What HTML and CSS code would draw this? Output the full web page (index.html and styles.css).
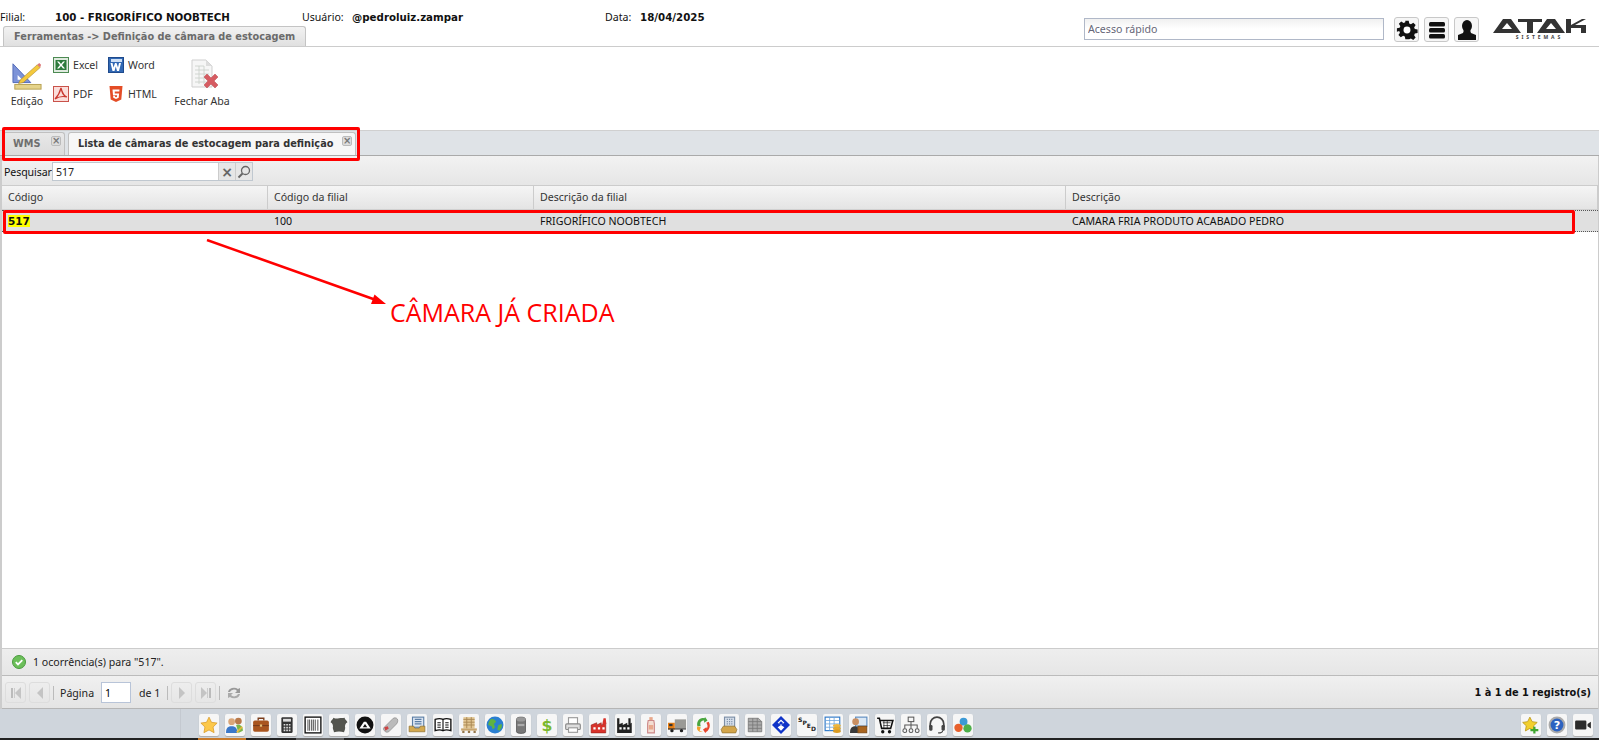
FILE: index.html
```html
<!DOCTYPE html>
<html lang="pt-BR">
<head>
<meta charset="utf-8">
<title>Definição de câmara de estocagem</title>
<link rel="stylesheet" href="styles.css">
</head>
<body>
<svg class="defs" width="0" height="0" aria-hidden="true">
<defs>
<symbol id="first" viewBox="0 0 14 14"><rect x="2" y="2" width="2" height="10" fill="#bbb"/><rect x="5" y="2" width="1" height="10" fill="#ccc"/><path d="M12 1v12L6 7z" fill="#c4c4c4"/></symbol>
<symbol id="prev" viewBox="0 0 14 14"><path d="M10 1v12L4 7z" fill="#c4c4c4"/></symbol>
<symbol id="next" viewBox="0 0 14 14"><path d="M4 1v12l6-6z" fill="#c4c4c4"/></symbol>
<symbol id="last" viewBox="0 0 14 14"><path d="M2 1v12l6-6z" fill="#c4c4c4"/><rect x="8" y="2" width="1" height="10" fill="#ccc"/><rect x="10" y="2" width="2" height="10" fill="#bbb"/></symbol>
</defs>
</svg>

<header class="top">
  <div class="top-info">
    <div class="info-row">
      <span class="lbl lbl-filial">Filial:</span><b class="val val-filial">100 - FRIGORÍFICO NOOBTECH</b>
      <span class="lbl lbl-user">Usuário:</span><b class="val val-user">@pedroluiz.zampar</b>
      <span class="lbl lbl-data">Data:</span><b class="val">18/04/2025</b>
    </div>
    <div class="crumb">Ferramentas -&gt; Definição de câmara de estocagem</div>
  </div>
  <div class="top-right">
    <input class="quick" type="text" placeholder="Acesso rápido">
    <button class="tbtn" aria-label="Configurações"><svg width="22" height="22" viewBox="0 0 24 24"><path fill="#111" d="M10 1h4l.6 3.2 2 .9 2.8-1.8 2.8 2.8-1.8 2.8.9 2 3.2.6v4l-3.2.6-.9 2 1.8 2.8-2.8 2.8-2.8-1.8-2 .9L14 23h-4l-.6-3.2-2-.9-2.8 1.8-2.8-2.8 1.8-2.8-.9-2L0 14v-4l3.2-.6.9-2L2.300 4.600l2.800-2.800 2.800 1.800 2-.9z" transform="translate(1 1) scale(.92)"/><circle cx="12" cy="12" r="3.800" fill="#fff"/></svg></button>
    <button class="tbtn" aria-label="Menu"><svg width="20" height="20" viewBox="0 0 20 20"><rect x="2" y="2" width="16" height="4.500" rx="1.500" fill="#111"/><rect x="2" y="8" width="16" height="4.500" rx="1.500" fill="#111"/><rect x="2" y="14" width="16" height="4.500" rx="1.500" fill="#111"/></svg></button>
    <button class="tbtn" aria-label="Usuário"><svg width="20" height="22" viewBox="0 0 20 22"><ellipse cx="10" cy="7" rx="5" ry="6" fill="#111"/><path d="M7 11h6l1 3 5 2v5H1v-5l5-2z" fill="#111"/></svg></button>
    <div class="logo">
      <svg width="93" height="14" viewBox="0 0 93 14"><path fill="#333" fill-rule="evenodd" d="M0 14 10 0h8l10 14zM9 10h10l-5-6z"/><path fill="#333" d="M25 0h24v3H40v11h-6V3h-9z"/><path fill="#333" fill-rule="evenodd" d="M44 14 54 0h8l10 14zM53 10h10l-5-6z"/><path fill="#333" d="M73 0h5v6l11-6h4L82 6h11v8h-5V9H78v5h-5z"/></svg>
      <span class="logo-sub">SISTEMAS</span>
    </div>
  </div>
</header>

<section class="toolbar">
  <div class="tool tool-big tool-edit">
    <svg width="30" height="30" viewBox="0 0 32 30"><path d="M1 2 20 22H1z" fill="#7d93d8" stroke="#5069b8"/><path d="M6 14l5 5H6z" fill="#fff"/><path d="M9 19 27 3l3 3-18 16-5 1z" fill="#f4c93c" stroke="#a98421" stroke-width=".6"/><path d="M27 3l3 3 1-3-2-2z" fill="#d77"/><rect x="3" y="24" width="28" height="5" fill="#e5d38a" stroke="#b69f4f"/></svg>
    <span>Edição</span>
  </div>
  <div class="tool-grid">
    <div class="tool"><svg class="ic" width="16" height="16" viewBox="0 0 16 16"><rect x=".5" y=".5" width="15" height="15" fill="#dfeadf" stroke="#4c8a52"/><rect x="2.500" y="3" width="11" height="10" fill="#2c7a3b"/><path d="M4 4.500 7 8l-3 3.500h2L8 9l2 2.500h2L9 8l3-3.500h-2L8 7 6 4.500z" fill="#fff"/></svg><span>Excel</span></div>
    <div class="tool"><svg class="ic" width="16" height="16" viewBox="0 0 16 16"><rect x=".5" y=".5" width="15" height="15" fill="#3168b4" stroke="#1f4a8c"/><rect x="3" y="2" width="11" height="3" fill="#cfe0f5"/><path d="M2.500 6h2l1 4.500L7 6h1.500L10 10.500 11 6h2l-2 8H9L7.800 9.500 6.500 14h-2z" fill="#fff"/></svg><span>Word</span></div>
    <div class="tool"><svg class="ic" width="16" height="16" viewBox="0 0 16 16"><rect x=".5" y=".5" width="15" height="15" fill="#fbdedb" stroke="#c9524a"/><path d="M8 2c-1 4-3 8-6 11 3-2 8-3 12-2-4-1-5-5-6-9z" fill="none" stroke="#c9362e" stroke-width="1.200"/></svg><span>PDF</span></div>
    <div class="tool"><svg class="ic" width="16" height="16" viewBox="0 0 16 16"><path d="M1.500 0h13l-1.200 13.500L8 16l-5.300-2.500z" fill="#e44d26"/><path d="M4.500 3.500h7l-.2 2H6.700l.1 2h4.300l-.4 4.300L8 13l-2.700-1.200-.2-2h1.800l.1 1L8 11.300l1-.5.1-1.500H5z" fill="#fff"/></svg><span>HTML</span></div>
  </div>
  <div class="tool tool-big tool-close">
    <svg width="36" height="32" viewBox="0 0 36 32"><path d="M8 1h14l6 6v21H8z" fill="#f6f6f6" stroke="#cfcfcf"/><path d="M22 1v6h6z" fill="#ddd"/><g fill="none" stroke="#c9cfc9" stroke-width=".8"><path d="M11 7h9M11 11h14M11 15h14M11 19h14M11 23h14M15 7v18M20 7v18"/></g><path d="M20 18l3-3 4 4 4-4 3 3-4 4 4 4-3 3-4-4-4 4-3-3 4-4z" fill="#d65c62" stroke="#b9454b" stroke-width=".5"/></svg>
    <span>Fechar Aba</span>
  </div>
</section>

<nav class="tabs">
  <div class="tab tab-off"><span>WMS</span><i class="x">×</i></div>
  <div class="tab tab-on"><span>Lista de câmaras de estocagem para definição</span><i class="x">×</i></div>
</nav>

<main class="panel">
  <div class="search">
    <label class="search-lbl" for="q">Pesquisar</label>
    <div class="search-box">
      <input id="q" type="text" value="517">
      <span class="sbtn sbtn-x">×</span>
      <span class="sbtn"><svg width="14" height="14" viewBox="0 0 14 14"><circle cx="8.500" cy="5.500" r="4" fill="none" stroke="#666" stroke-width="1.300"/><path d="M5.500 8.500 1.500 12.500" stroke="#666" stroke-width="2"/></svg></span>
    </div>
  </div>
  <div class="grid grid-head">
    <div class="c c1">Código</div><div class="c c2">Código da filial</div><div class="c c3">Descrição da filial</div><div class="c c4">Descrição</div>
  </div>
  <div class="grid grid-row">
    <div class="c c1"><mark>517</mark></div><div class="c c2">100</div><div class="c c3">FRIGORÍFICO NOOBTECH</div><div class="c c4">CAMARA FRIA PRODUTO ACABADO PEDRO</div>
  </div>
  <div class="grid-body"></div>
  <div class="status">
    <svg width="14" height="14" viewBox="0 0 14 14"><circle cx="7" cy="7" r="6.500" fill="#6cbf5a" stroke="#4a9a3e"/><path d="M3.800 7.200 6 9.400l4.300-4.300" fill="none" stroke="#fff" stroke-width="1.800"/></svg>
    <span>1 ocorrência(s) para "517".</span>
  </div>
  <div class="pager">
    <span class="pbtn"><svg width="14" height="14"><use href="#first"/></svg></span>
    <span class="pbtn"><svg width="14" height="14"><use href="#prev"/></svg></span>
    <i class="sep"></i>
    <span class="pg-lbl">Página</span>
    <input class="pg-in" type="text" value="1">
    <span class="pg-de">de 1</span>
    <i class="sep sep-b"></i>
    <span class="pbtn"><svg width="14" height="14"><use href="#next"/></svg></span>
    <span class="pbtn"><svg width="14" height="14"><use href="#last"/></svg></span>
    <i class="sep"></i>
    <svg class="refresh" width="16" height="16" viewBox="0 0 16 16"><path d="M2 7a6 5 0 0 1 10-3l2-1v5H9l2-2A4 3.500 0 0 0 4 7z" fill="#999"/><path d="M14 9a6 5 0 0 1-10 3l-2 1V8h5L5 10a4 3.500 0 0 0 7-1z" fill="#aaa"/></svg>
    <b class="pg-total">1 à 1 de 1 registro(s)</b>
  </div>
</main>

<footer class="dock">
  <div class="dock-main">
    <span class="di"><svg viewBox="0 0 16 16"><path d="M8 1l2.200 4.600 5 .7-3.600 3.500.9 5L8 12.400 3.500 14.800l.9-5L.8 6.300l5-.7z" fill="#fcc84a" stroke="#d99b2b" stroke-width=".7"/></svg></span>
    <span class="di"><svg viewBox="0 0 16 16"><circle cx="5" cy="5" r="3" fill="#d9a679"/><circle cx="11" cy="4.500" r="3" fill="#b9794a"/><path d="M0 15c0-5 2-6 5-6s5 1 5 6z" fill="#3b78c9"/><path d="M9 8c4-1 6 1 6 5l-4 2z" fill="#7ab648"/><path d="M9 14l5-5 1 1-5 5z" fill="#e9b93c"/></svg></span>
    <span class="di"><svg viewBox="0 0 16 16"><path d="M5.500 4V2h5v2" fill="none" stroke="#7a3c1b" stroke-width="1.200"/><rect x="1" y="4" width="14" height="10" rx="1.500" fill="#a9551f"/><rect x="1" y="8" width="14" height="1" fill="#7a3c1b"/><rect x="7" y="7.500" width="2" height="2" fill="#e6c27a"/></svg></span>
    <span class="di"><svg viewBox="0 0 16 16"><rect x="3" y="1" width="10" height="14" rx="1" fill="#333"/><rect x="4.500" y="2.500" width="7" height="2.500" fill="#ddd"/><path d="M5 7h1.500v1.500H5zM7.300 7h1.500v1.500H7.300zM9.600 7h1.500v1.500H9.600zM5 9.500h1.500V11H5zM7.300 9.500h1.500V11H7.300zM9.600 9.500h1.500V11H9.600zM5 12h1.500v1.500H5zM7.300 12h1.500v1.500H7.300zM9.600 12h1.500v1.500H9.600z" fill="#ddd"/></svg></span>
    <span class="di"><svg viewBox="0 0 16 16"><rect x="1" y="1" width="14" height="14" fill="#fff" stroke="#111" stroke-width="1.200"/><path d="M3.500 3v10M5 3v10M6.800 3v10M8.300 3v10M10 3v10M12.300 3v10" stroke="#555" stroke-width=".9"/></svg></span>
    <span class="di"><svg viewBox="0 0 16 16"><path d="M3 1.500c2 1 3 1 5 .5s3 0 5-.5c0 2 2 2 2.500 4-2 1-2.500 3-2 5 0 2-1 3-1 4-3-1-6-1-9 0 0-2-1-2-1-4 .5-2 0-4-2-5C1 3.500 3 3 3 1.500z" fill="#53544e"/></svg></span>
    <span class="di"><svg viewBox="0 0 16 16"><circle cx="8" cy="8" r="7.500" fill="#111"/><path d="M3 11l4-6h2l4 6z" fill="#fff"/><path d="M6 10l2-3 2 3z" fill="#111"/></svg></span>
    <span class="di"><svg viewBox="0 0 16 16"><path d="M2 10 10 2c2-1 4 0 4 2s-1 3-2 4l-6 6c-2 1-3 0-4-1s-1-2 0-3z" fill="#bbb" stroke="#888" stroke-width=".6"/><path d="M2 10l3-1 1 2-3 2z" fill="#c44"/></svg></span>
    <span class="di"><svg viewBox="0 0 16 16"><rect x="4" y="1" width="10" height="9" fill="#dce6f3" stroke="#5c7fa6"/><path d="M6 3h6M6 5h6M6 7h6" stroke="#5c7fa6"/><path d="M1 9h4l1 2h4l1-2h4v5H1z" fill="#d4a94f" stroke="#8a6c2a" stroke-width=".6"/></svg></span>
    <span class="di"><svg viewBox="0 0 16 16"><path d="M1 3c3-1 5-1 7 0 2-1 4-1 7 0v10c-3-1-5-1-7 0-2-1-4-1-7 0z" fill="#fff" stroke="#111" stroke-width="1.200"/><path d="M8 3v10M3 6h3M3 8h3M3 10h3M10 6h3M10 8h3M10 10h3" stroke="#111"/></svg></span>
    <span class="di"><svg viewBox="0 0 16 16"><path d="M3 1h10v10H3z" fill="#e2c692"/><path d="M3 3h10M3 5.500h10M3 8h10M6 1v10M10 1v10" stroke="#a88752" stroke-width=".8"/><path d="M1 11h14v2H1z" fill="#c8a56c"/><path d="M2 13h2v2H2zM7 13h2v2H7zM12 13h2v2h-2z" fill="#94764a"/></svg></span>
    <span class="di"><svg viewBox="0 0 16 16"><circle cx="8" cy="8" r="7.500" fill="#2a7fd0"/><path d="M4 3c2-1 4 0 5 2l-2 2 1 3-2 2-1-3-3-1c0-2 1-4 2-5zM11 8l3-1v3l-2 3-2-1z" fill="#5fb341"/></svg></span>
    <span class="di"><svg viewBox="0 0 16 16"><path d="M4 3a4 2 0 0 1 8 0v11a4 1.500 0 0 1-8 0z" fill="#777" stroke="#444" stroke-width=".6"/><rect x="5" y="7" width="6" height="2" fill="#aaa"/><ellipse cx="8" cy="3" rx="4" ry="1.800" fill="#999"/></svg></span>
    <span class="di"><svg viewBox="0 0 16 16"><text x="8" y="13" text-anchor="middle" class="dollar">$</text></svg></span>
    <span class="di"><svg viewBox="0 0 16 16"><rect x="4" y="1.500" width="8" height="6" fill="#fff" stroke="#999"/><rect x="1.500" y="7" width="13" height="5" rx="1" fill="#ddd" stroke="#888"/><rect x="4" y="10.500" width="8" height="4" fill="#fff" stroke="#999"/></svg></span>
    <span class="di"><svg viewBox="0 0 16 16"><path d="M1 8l5-2v2l4-2v2l4-2v9H1z" fill="#d8322a" stroke="#8f1e18" stroke-width=".5"/><path d="M11 7l1-5h2l.5 5z" fill="#d8322a"/><path d="M3 10h2v2H3zM7 10h2v2H7zM11 10h2v2h-2z" fill="#fff"/></svg></span>
    <span class="di"><svg viewBox="0 0 16 16"><path d="M1 8l5-2v2l4-2v2l4-2v9H1z" fill="#222"/><path d="M1 2h2v6H1zM11 2h2v5h-2z" fill="#222"/><path d="M3 10h2v2H3zM6.500 10h2v2h-2zM10 10h2v2h-2z" fill="#fff"/></svg></span>
    <span class="di"><svg viewBox="0 0 16 16"><rect x="6.500" y="1" width="3" height="3" fill="#e8a88c"/><path d="M5.500 4h5l.5 3v8H5V7z" fill="#f3ddd2" stroke="#c88"/><rect x="6" y="8" width="4" height="4" fill="#e8a88c"/></svg></span>
    <span class="di"><svg viewBox="0 0 16 16"><rect x="6" y="3" width="10" height="8" fill="#9a9a96"/><path d="M0 6h6v6H0z" fill="#e67e14"/><rect x="1" y="7" width="3" height="2" fill="#333"/><rect x="0" y="11" width="16" height="1" fill="#333"/><circle cx="3.500" cy="13" r="1.500" fill="#222"/><circle cx="12" cy="13" r="1.500" fill="#222"/></svg></span>
    <span class="di"><svg viewBox="0 0 16 16"><path d="M3 9C2 5 5 1 9 2l1-1 2 3-3 2V4C6 4 5 6 6 9z" fill="#4aa63f"/><path d="M13 5c2 3 1 7-2 9l-1 1-2-3 3-2 .5 1c1-2 .5-3-.5-5z" fill="#e8462e"/><path d="M3 9l3 1-1 3 3 1H5C3 13 2 11 3 9z" fill="#f2a12c"/></svg></span>
    <span class="di"><svg viewBox="0 0 16 16"><rect x="4" y="1" width="9" height="9" fill="#d5deea" stroke="#7c8ea6"/><path d="M6 3h5M6 5h5M6 7h5" stroke="#7c8ea6" stroke-dasharray="1 1"/><path d="M3 9h10l2 3-1 3H2l-1-3z" fill="#d3a54a" stroke="#8a6c2a" stroke-width=".6"/></svg></span>
    <span class="di"><svg viewBox="0 0 16 16"><path d="M2 2h9l3 3v9H2z" fill="#aaa" stroke="#666" stroke-width=".6"/><path d="M2 5h12M2 8h12M2 11h12M6 2v12M10 2v12" stroke="#777" stroke-width=".7"/></svg></span>
    <span class="di"><svg viewBox="0 0 16 16"><path d="M8 0 16 8 8 16 0 8z" fill="#1034c8"/><path d="M5 6l3-3 3 3-3 2zM5 10l3-2 3 2-3 3z" fill="#fff"/><path d="M6 6.500l2-1.800 2 1.800-2 1.200z" fill="#1034c8"/></svg></span>
    <span class="di di-sped"><span>S</span><span>P</span><span>E</span><span>D</span></span>
    <span class="di"><svg viewBox="0 0 16 16"><rect x="1" y="1" width="13" height="12" fill="#fff" stroke="#2c78c8"/><path d="M1 4h13M1 7h13M1 10h13M5 1v12M9 1v12" stroke="#6aa3dc" stroke-width=".7"/><ellipse cx="11.500" cy="8.500" rx="3.500" ry="1.500" fill="#eeb53c"/><ellipse cx="11.500" cy="11" rx="3.500" ry="1.500" fill="#e8a92c"/><ellipse cx="11.500" cy="13.500" rx="3.500" ry="1.500" fill="#d9991f"/></svg></span>
    <span class="di"><svg viewBox="0 0 16 16"><rect x="5" y="1" width="10" height="8" fill="#dbe8f5" stroke="#5c8cc0"/><circle cx="5" cy="5" r="3" fill="#c98f62"/><path d="M0 15c0-5 2-6 5-6l2 1v5z" fill="#3a3a3a"/><rect x="7" y="9" width="8" height="6" fill="#a9651f" stroke="#6e4012" stroke-width=".6"/></svg></span>
    <span class="di"><svg viewBox="0 0 16 16"><path d="M1 2h2l2 9h8l2-7H4" fill="#fff" stroke="#111" stroke-width="1.400"/><path d="M6 6h7M6.500 8.500h6M7 4v7M10 4v7" stroke="#111" stroke-width=".6"/><circle cx="6" cy="14" r="1.500" fill="#111"/><circle cx="12" cy="14" r="1.500" fill="#111"/></svg></span>
    <span class="di"><svg viewBox="0 0 16 16"><g fill="none" stroke="#555" stroke-width=".9"><rect x="5.500" y="1" width="5" height="4"/><path d="M8 5v3M2.500 11V8h11v3M8 8v3"/><circle cx="2.500" cy="13" r="1.700"/><circle cx="8" cy="13" r="1.700"/><circle cx="13.500" cy="13" r="1.700"/></g></svg></span>
    <span class="di"><svg viewBox="0 0 16 16"><path d="M2 10V7a6 6 0 0 1 12 0v3" fill="none" stroke="#444" stroke-width="1.500"/><rect x="1" y="8" width="3" height="5" rx="1" fill="#444"/><rect x="12" y="8" width="3" height="5" rx="1" fill="#444"/><path d="M13 13c0 2-2 2-4 2" fill="none" stroke="#444"/></svg></span>
    <span class="di"><svg viewBox="0 0 16 16"><circle cx="8.500" cy="5" r="3.500" fill="#3c9ad6"/><circle cx="4" cy="10.500" r="3.700" fill="#e8602c"/><circle cx="12" cy="11" r="3.700" fill="#4eb04a"/></svg></span>
  </div>
  <div class="dock-side">
    <span class="di"><svg viewBox="0 0 16 16"><path d="M7 1l2 4 4.500.7-3.200 3 .8 4.600L7 11 3 13.300l.8-4.600-3.200-3L5 5z" fill="#f2cf2e" stroke="#b99312" stroke-width=".7"/><path d="M10 9.500h2v2h2.500v2H12v2h-2v-2H7.500v-2H10z" fill="#3fa52f"/></svg></span>
    <span class="di"><svg viewBox="0 0 16 16"><circle cx="8" cy="8" r="7.500" fill="#aaa"/><circle cx="8" cy="8" r="5.700" fill="#2c62c0"/><text x="8" y="11.500" text-anchor="middle" class="q">?</text></svg></span>
    <span class="di"><svg viewBox="0 0 16 16"><rect x="1" y="4" width="10" height="8" rx="1" fill="#2b2b2b"/><path d="M12 7l3-2v6l-3-2z" fill="#2b2b2b"/></svg></span>
  </div>
</footer>
<div class="taskbar"><i class="task-a"></i><i class="task-b"></i></div>

<div class="note note-tabs"></div>
<div class="note note-row"></div>
<svg class="arrow" width="190" height="80" viewBox="0 0 190 80"><path d="M1 1 170 61" stroke="#f00" stroke-width="2.500"/><path d="M180 65 165 65 168.500 55.600z" fill="#f00"/></svg>
<div class="callout">CÂMARA JÁ CRIADA</div>
</body>
</html>
```
FILE: styles.css
```css
* { box-sizing: border-box; }
html, body { margin: 0; height: 100%; overflow: hidden; }
body {
  width: 1599px; height: 740px; position: relative; background: #fff; color: #111;
  font: 10.600px/14px "Noto Sans", "Open Sans", sans-serif;
  display: flex; flex-direction: column;
}
.defs { position: absolute; }
input, button { font: inherit; }

.top { height: 47px; flex: none; display: flex; justify-content: space-between; border-bottom: 1px solid #ccc; }
.top-info { display: flex; flex-direction: column; }
.info-row { height: 27px; padding-top: 10px; display: flex; white-space: nowrap; }
.val { font-family: "DejaVu Sans", sans-serif; font-size: 10.250px; font-weight: 700; color: #111; }
.lbl-filial { width: 55px; }
.val-filial { width: 247px; }
.lbl-user { width: 50px; }
.val-user { width: 253px; }
.lbl-data { width: 35px; }
.crumb {
  margin-left: 3px; width: 303px; height: 20px; padding: 3px 0 0 10px; white-space: nowrap;
  font-family: "DejaVu Sans", sans-serif; font-weight: 700; font-size: 9.750px; color: #6b6b6b;
  background: linear-gradient(#f2f2f2, #e0e0e0); border: 1px solid #c4c4c4; border-bottom: 0; border-radius: 3px 3px 0 0;
}
.top-right { display: flex; align-items: flex-start; padding: 17px 13px 0 0; }
.quick {
  width: 300px; height: 22px; margin: 1px 10px 0 0; padding: 0 3px; border: 1px solid #b0b8c8; outline: 0; color: #666;
  background: linear-gradient(#f0f0f0, #fff 50%);
}
.quick::placeholder { color: #667; opacity: 1; }
.tbtn {
  width: 25px; height: 25px; margin-right: 5px; padding: 0; display: flex; align-items: center; justify-content: center;
  background: #f6f6f6; border: 1px solid #c8c8c8; border-radius: 3px;
}
.tbtn:last-of-type { margin-right: 14px; }
.logo { width: 93px; display: flex; flex-direction: column; align-items: center; gap: 1px; margin-top: 2px; }
.logo svg { display: block; }
.logo-sub { font-size: 5px; line-height: 6px; letter-spacing: 2.900px; color: #444; font-weight: 700; }

.toolbar { height: 84px; flex: none; display: flex; align-items: flex-start; padding-top: 3px; border-bottom: 1px solid #d0d0d0; background: #fff; }
.tool { display: flex; align-items: center; gap: 4px; height: 29px; color: #333; }
.tool-big { flex-direction: column; height: auto; gap: 3px; }
.tool-edit { width: 53px; padding-left: 1px; margin-top: 11px; }
.tool-close { width: 54px; margin-top: 9px; white-space: nowrap; }
.tool-grid { display: grid; grid-template-columns: 55px 67px; }

.tabs { height: 25px; flex: none; display: flex; align-items: flex-end; gap: 3px; padding-left: 3px; background: #dfe3e7; border-bottom: 1px solid #aaa; }
.tab { height: 23px; position: relative; padding: 4px 0 0 9px; white-space: nowrap; font-family: "DejaVu Sans", sans-serif; font-weight: 700; font-size: 9.750px; border: 1px solid #c0c0c0; border-bottom: 0; border-radius: 3px 3px 0 0; }
.tab-off { width: 62px; color: #6f6f6f; background: linear-gradient(#e8e8e8, #dcdcdc); }
.tab-on { width: 288px; color: #333; background: #f7f7f7; }
.x { position: absolute; right: 3px; top: 3px; width: 10px; height: 10px; border-radius: 2px; background: #ddd; border: 1px solid #bbb; color: #777; font: 700 10px/8px "DejaVu Sans", sans-serif; text-align: center; }

.panel { flex: 1; min-height: 0; display: flex; flex-direction: column; border-left: 2px solid #ccc; border-right: 1px solid #ccc; }
.search { height: 30px; flex: none; display: flex; align-items: center; gap: 2px; padding: 2px 0 0 2px; background: linear-gradient(#f2f2f2, #e6e6e6); border-bottom: 1px solid #ccc; }
.search-lbl { width: 46px; flex: none; white-space: nowrap; letter-spacing: -.1px; }
.search-box { display: flex; height: 19px; border: 1px solid #c0c8d0; background: #fff; }
.search-box input { width: 165px; border: 0; outline: 0; padding: 0 3px; color: #222; }
.sbtn { width: 17px; display: flex; align-items: center; justify-content: center; border-left: 1px solid #ccc; background: #e6e6e6; color: #666; font: 700 14px "DejaVu Sans", sans-serif; }

.grid { display: grid; grid-template-columns: 266px 266px 532px 1fr; flex: none; }
.grid-head { height: 24px; background: linear-gradient(#f5f5f5, #e4e4e4); border-bottom: 1px solid #d0d0d0; color: #333; }
.grid-head .c { border-right: 1px solid #ccc; }
.grid-row { height: 22px; background: #e0e0e0; border-top: 1px dotted #555; border-bottom: 1px dotted #555; }
.c { padding: 4px 6px; white-space: nowrap; overflow: hidden; }
.grid-row .c { padding-top: 3px; }
mark { background: #ff0; color: #111; font-family: "DejaVu Sans", sans-serif; font-size: 10.500px; font-weight: 700; }
.grid-body { flex: 1; min-height: 0; background: #fff; }

.status { height: 28px; flex: none; display: flex; align-items: center; gap: 7px; padding-left: 10px; border-top: 1px solid #ccc; background: linear-gradient(#eee, #e6e6e6); border-bottom: 1px solid #bbb; color: #222; }
.pager { height: 33px; flex: none; display: flex; align-items: center; padding: 1px 0 0 3px; background: linear-gradient(#f0f0f0, #e4e4e4); border-bottom: 1px solid #b5b5b5; color: #222; }
.pbtn { width: 21px; height: 21px; margin-right: 3px; display: flex; align-items: center; justify-content: center; border: 1px solid #ddd; border-radius: 3px; }
.sep { width: 1px; height: 14px; margin-right: 6px; background: #bbb; }
.sep-b { margin-right: 3px; }
.pg-lbl { width: 41px; }
.pg-in { width: 30px; height: 21px; padding: 0 3px; border: 1px solid #b8c4d8; outline: 0; }
.pg-de { margin-left: 8px; width: 28px; }
.pg-total { margin-left: auto; padding-right: 7px; font-family: "DejaVu Sans", sans-serif; font-size: 9.800px; color: #111; }

.dock { height: 29px; flex: none; position: relative; display: flex; justify-content: space-between; padding: 5px 6px 0 199px; background: linear-gradient(90deg, #cfd5dc 180px, #c4c9d0 180px, #c4c9d0 181px, #cfd5dc 181px); }
.dock-main, .dock-side { display: flex; gap: 6px; }
.di { width: 20px; height: 22px; display: flex; align-items: center; justify-content: center; background: #f6f6f6; border-radius: 2px; box-shadow: 0 1px 1px #aaa; }
.di svg { width: 18px; height: 18px; }
.dollar { font: 700 14px "DejaVu Sans", sans-serif; fill: #7ab92e; }
.q { font: 700 10px "DejaVu Sans", sans-serif; fill: #fff; }
.di-sped { font: 700 6px/1 "DejaVu Sans", sans-serif; color: #222; gap: 0; align-items: flex-start; padding-top: 3px; }
.di-sped span:nth-child(2) { margin-top: 3px; }
.di-sped span:nth-child(3) { margin-top: 6px; }
.di-sped span:nth-child(4) { margin-top: 9px; }

.taskbar { height: 2px; flex: none; display: flex; background: #222; }
.task-a { width: 48px; margin-left: 198px; background: #c87a2a; }
.task-b { width: 48px; margin-left: 50px; background: #666; }

.note { position: absolute; border: 3px solid #f00; border-radius: 2px; pointer-events: none; }
.note-tabs { left: 2px; top: 127px; width: 358px; height: 34px; }
.note-row { left: 3px; top: 210px; width: 1572px; height: 24px; }
.arrow { position: absolute; left: 206px; top: 239px; }
.callout { position: absolute; left: 390px; top: 296px; font: 25px/32px "Open Sans", sans-serif; color: #f00; white-space: nowrap; }
```
